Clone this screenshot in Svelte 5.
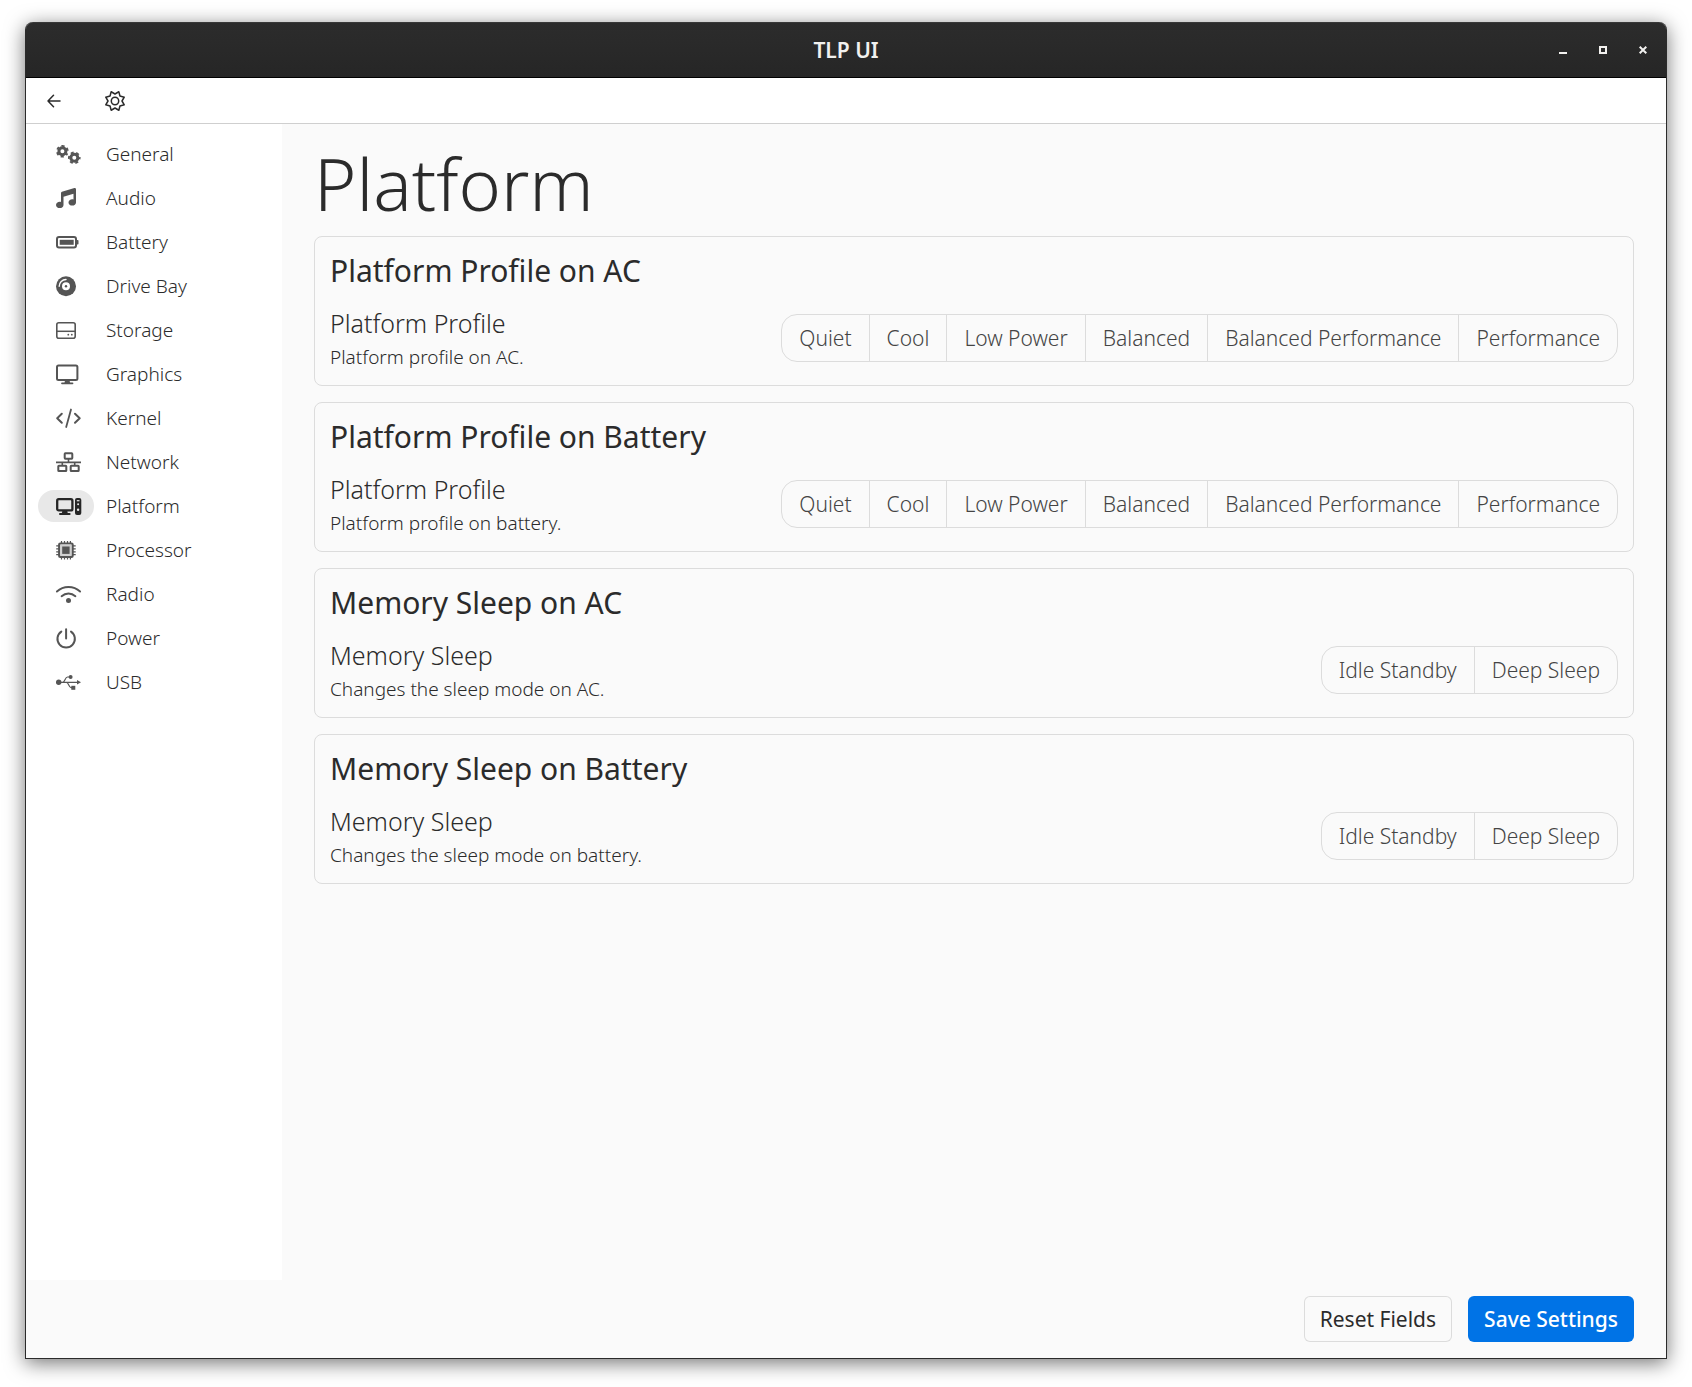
<script>
  const nav = [
    { id: 'general', label: 'General', w: 25 },
    { id: 'audio', label: 'Audio', w: 20 },
    { id: 'battery', label: 'Battery', w: 23 },
    { id: 'drive', label: 'Drive Bay', w: 20 },
    { id: 'storage', label: 'Storage', w: 20 },
    { id: 'graphics', label: 'Graphics', w: 23 },
    { id: 'kernel', label: 'Kernel', w: 25 },
    { id: 'network', label: 'Network', w: 25 },
    { id: 'platform', label: 'Platform', w: 26 },
    { id: 'processor', label: 'Processor', w: 20 },
    { id: 'radio', label: 'Radio', w: 25 },
    { id: 'power', label: 'Power', w: 20 },
    { id: 'usb', label: 'USB', w: 25 }
  ];
  const profiles = ['Quiet', 'Cool', 'Low Power', 'Balanced', 'Balanced Performance', 'Performance'];
  const sleeps = ['Idle Standby', 'Deep Sleep'];
  const cards = [
    { title: 'Platform Profile on AC', label: 'Platform Profile', desc: 'Platform profile on AC.', options: profiles },
    { title: 'Platform Profile on Battery', label: 'Platform Profile', desc: 'Platform profile on battery.', options: profiles },
    { title: 'Memory Sleep on AC', label: 'Memory Sleep', desc: 'Changes the sleep mode on AC.', options: sleeps },
    { title: 'Memory Sleep on Battery', label: 'Memory Sleep', desc: 'Changes the sleep mode on battery.', options: sleeps }
  ];
  let active = $state('platform');
  let choices = $state({});

  const cog = Array.from({ length: 16 }, (_, i) => {
    const a = ((i + 1) * Math.PI) / 8;
    const r = i % 2 ? 7 : 10;
    return `${(11 + r * Math.cos(a)).toFixed(2)},${(11 + r * Math.sin(a)).toFixed(2)}`;
  }).join(' ');
</script>

{#snippet icon(id, w)}
  <svg class="icon" width={w} height="20" viewBox="0 0 {w} 20" aria-hidden="true">
    {#if id === 'general'}
      <circle cx="6.4" cy="7.3" r="3.5" stroke-width="3" />
      <circle cx="6.4" cy="7.3" r="5.4" stroke-width="1.8" stroke-dasharray="3 2.65" stroke-dashoffset="1.5" transform="rotate(30 6.4 7.3)" />
      <circle cx="18.3" cy="13.8" r="3.5" stroke-width="3" />
      <circle cx="18.3" cy="13.8" r="5.4" stroke-width="1.8" stroke-dasharray="3 2.65" stroke-dashoffset="1.5" />
    {:else if id === 'audio'}
      <path class="fill" transform="scale(.0390625)" d="M499.1 6.3c8.1 6 12.9 15.6 12.9 25.7V368c0 44.2-43 80-96 80s-96-35.800-96-80 43-80 96-80c11.200 0 22 1.600 32 4.600V147L192 223.800V432c0 44.200-43 80-96 80S0 476.200 0 432s43-80 96-80c11.200 0 22 1.600 32 4.600V128c0-14.100 9.300-26.600 22.800-30.700l320-96c9.700-2.900 20.200-1.100 28.300 5z" />
    {:else if id === 'battery'}
      <rect x="1" y="5" width="19" height="10.600" rx="2" />
      <rect class="fill" x="20.500" y="8" width="2" height="4.600" rx=".8" />
      <rect class="fill" x="3.700" y="7.800" width="14" height="5" />
    {:else if id === 'drive'}
      <circle class="fill" cx="10" cy="10.300" r="10" />
      <circle class="hole" cx="10" cy="10.300" r="4" />
      <circle class="fill" cx="10" cy="10.300" r="1.200" />
      <path class="cut" d="M3.200 10.300A6.800 6.800 0 0 1 10 3.500" />
    {:else if id === 'storage'}
      <rect x=".8" y="2.800" width="18.400" height="15.400" rx="2" stroke-width="1.600" />
      <path d="M1 11.300h18" stroke-width="1.500" />
      <circle class="fill" cx="12.300" cy="14.700" r=".9" />
      <circle class="fill" cx="15.800" cy="14.700" r=".9" />
    {:else if id === 'graphics'}
      <rect x="1" y="1.400" width="20.400" height="14.600" rx="1.500" />
      <path d="M6 19.300h10.500" stroke-linecap="round" stroke-width="1.800" />
      <path class="fill" d="M9 16.500h4.600l.5 2.500h-5.600z" />
    {:else if id === 'kernel'}
      <path d="M5.800 5.800 1.200 10.300l4.600 4.500M19 5.800l4.700 4.500-4.700 4.500" stroke-linecap="round" stroke-linejoin="round" />
      <path d="M15 1.500 10.200 19" stroke-linecap="round" stroke-width="1.800" />
    {:else if id === 'network'}
      <rect x="8.700" y="1.300" width="7.600" height="5.400" rx=".6" />
      <rect x="2.300" y="13.700" width="8" height="5.400" rx=".6" />
      <rect x="14.700" y="13.700" width="8" height="5.400" rx=".6" />
      <path d="M0 10.400h25M12.500 7v3.400M6.300 10.400v3M18.700 10.400v3" stroke-width="1.600" />
    {:else if id === 'platform'}
      <rect x="1.200" y="3.200" width="15.200" height="11.200" rx="1.500" stroke-width="2.300" />
      <path d="M4 18h9.600" stroke-linecap="round" />
      <path class="fill" d="M6.300 15h5l.5 2.500h-6z" />
      <rect class="fill" x="19" y="2" width="6.300" height="17" rx="2" />
      <path class="notch" d="M20.800 4.700h2.700" />
      <circle class="notch-dot" cx="22.100" cy="8.300" r="1" />
      <circle class="notch-dot" cx="22.100" cy="13.700" r="1.200" />
    {:else if id === 'processor'}
      <rect x="3.200" y="3.500" width="13.400" height="13.400" rx="1" stroke-width="2.200" />
      <rect class="soft" x="4.300" y="4.600" width="11.200" height="11.200" />
      <rect class="fill" x="6.200" y="6.500" width="7.400" height="7.400" />
      <path d="M5.500 1v2M8.500 1v2M11.500 1v2M14.400 1v2M5.500 17.400v2M8.500 17.400v2M11.500 17.400v2M14.400 17.400v2M.2 5.800h3M.2 8.800h3M.2 11.800h3M.2 14.700h3M16.700 5.800h3M16.700 8.800h3M16.700 11.800h3M16.700 14.700h3" stroke-width="1.200" />
    {:else if id === 'radio'}
      <path d="M.9 7.500c6.500-6 16.700-6 23.200 0M5.600 12.200c4-3.700 9.800-3.700 13.800 0" stroke-linecap="round" stroke-width="1.900" />
      <circle class="fill" cx="12.500" cy="16.600" r="2.500" />
    {:else if id === 'power'}
      <path d="M5.300 3.600a8.700 8.700 0 1 0 9.700 0M10.100 1.300v9.200" stroke-linecap="round" stroke-width="2" />
    {:else if id === 'usb'}
      <circle class="fill" cx="2.700" cy="10.300" r="2.700" />
      <path d="M3 10.300h19M6.500 10.300c2.500 0 2.500-5.300 5-5.300h3M10.500 10.300c2 0 2.500 5.300 4.500 5.300h2" stroke-width="1.200" />
      <circle class="fill" cx="14.600" cy="5" r="2" />
      <rect class="fill" x="15.300" y="13.800" width="4" height="4" />
      <path class="fill" d="M21 8l4 2.300-4 2.300z" />
    {/if}
  </svg>
{/snippet}

<div class="desktop">
  <div class="window">
    <header class="titlebar">
      <span class="title">TLP UI</span>
      <div class="controls">
        <button aria-label="Minimize"><svg width="8" height="8" viewBox="0 0 8 8"><path d="M0 7h8" /></svg></button>
        <button aria-label="Maximize"><svg width="8" height="8" viewBox="0 0 8 8"><path d="M1 1h6v6H1z" /></svg></button>
        <button aria-label="Close"><svg width="8" height="8" viewBox="0 0 8 8"><path d="M.7.7l6.600 6.600M7.300.7.7 7.300" /></svg></button>
      </div>
    </header>

    <div class="toolbar">
      <button aria-label="Back">
        <svg width="14" height="14" viewBox="0 0 14 14"><path d="M13 7H1M6.500 1.300 1 7l5.500 5.700" /></svg>
      </button>
      <button aria-label="Settings">
        <svg width="22" height="22" viewBox="0 0 22 22"><polygon points={cog} /><circle cx="11" cy="11" r="3.700" /></svg>
      </button>
    </div>

    <div class="body">
      <nav>
        {#each nav as item}
          <a href="#{item.id}" class:active={active === item.id} onclick={() => (active = item.id)}>
            <span class="pill">{@render icon(item.id, item.w)}</span>
            {item.label}
          </a>
        {/each}
      </nav>

      <main>
        <h1>Platform</h1>
        {#each cards as card, c}
          <section>
            <h2>{card.title}</h2>
            <div class="setting">
              <div class="text">
                <h3 id="label-{c}">{card.label}</h3>
                <p>{card.desc}</p>
              </div>
              <div class="group" role="group" aria-labelledby="label-{c}">
                {#each card.options as option}
                  <button aria-pressed={choices[c] === option} onclick={() => (choices[c] = option)}>{option}</button>
                {/each}
              </div>
            </div>
          </section>
        {/each}
      </main>
    </div>

    <footer>
      <button class="reset" onclick={() => (choices = {})}>Reset Fields</button>
      <button class="save">Save Settings</button>
    </footer>
  </div>
</div>

<style>
  :global(body) {
    margin: 0;
    background: #fff;
  }
  .desktop {
    box-sizing: border-box;
    min-height: 100vh;
    padding: 22px 25px 28px;
    display: flex;
    font-family: 'Noto Sans', 'Open Sans', sans-serif;
    font-weight: 300;
    color: #2b2b2b;
  }
  .window {
    flex: 1;
    min-width: 0;
    display: flex;
    flex-direction: column;
    border: 1px solid #2b2b2b;
    border-top: 0;
    border-radius: 8px 8px 0 0;
    background: #fafafa;
    box-shadow: 0 4px 20px rgba(0, 0, 0, 0.55);
  }
  button {
    font: inherit;
    color: inherit;
    background: none;
    border: 0;
    padding: 0;
    cursor: pointer;
  }
  h1, h2, h3, p {
    margin: 0;
  }
  svg {
    display: block;
    fill: none;
  }

  .titlebar {
    box-sizing: border-box;
    height: 56px;
    display: grid;
    grid-template-columns: 1fr auto 1fr;
    align-items: center;
    border-top: 1px solid #383838;
    border-bottom: 1px solid #000;
    border-radius: 7px 7px 0 0;
    background: linear-gradient(#2c2c2c, #262626);
    color: #f2f1ef;
  }
  .title {
    grid-column: 2;
    font-size: 21px;
    font-weight: 600;
    line-height: 28px;
  }
  .controls {
    display: flex;
    justify-content: flex-end;
    gap: 16px;
    padding-right: 11px;
  }
  .controls button {
    width: 24px;
    height: 24px;
    display: grid;
    place-items: center;
  }
  .controls path {
    stroke: #f2f1ef;
    stroke-width: 2;
  }

  .toolbar {
    height: 45px;
    display: flex;
    align-items: center;
    gap: 32px;
    padding-left: 14px;
    border-bottom: 1px solid #cfcfcf;
    background: #fff;
  }
  .toolbar button {
    width: 28px;
    height: 28px;
    display: grid;
    place-items: center;
  }
  .toolbar svg {
    stroke: #2b2b2b;
    stroke-width: 1.5;
    stroke-linecap: round;
    stroke-linejoin: round;
  }
  .toolbar button + button {
    width: 30px;
  }

  .body {
    flex: 1;
    display: flex;
  }
  nav {
    box-sizing: border-box;
    flex: none;
    width: 256px;
    padding: 8px 12px;
    background: #fff;
  }
  nav a {
    height: 44px;
    display: flex;
    align-items: center;
    gap: 12px;
    font-size: 19px;
    color: #2b2b2b;
    text-decoration: none;
  }
  .pill {
    box-sizing: border-box;
    width: 56px;
    height: 32px;
    padding-left: 18px;
    display: flex;
    align-items: center;
    border-radius: 16px;
    --ink: #555;
    --paper: #fff;
  }
  .active .pill {
    background: #e8e8e8;
    --ink: #262626;
    --paper: #e8e8e8;
  }
  .icon {
    overflow: visible;
    stroke: var(--ink);
    stroke-width: 2;
  }
  .icon .fill {
    fill: var(--ink);
    stroke: none;
  }
  .icon .hole,
  .icon .notch-dot {
    fill: var(--paper);
    stroke: none;
  }
  .icon .cut {
    stroke: var(--paper);
    stroke-width: 1.4;
    stroke-linecap: round;
  }
  .icon .notch {
    stroke: var(--paper);
    stroke-width: 1.2;
  }
  .icon .soft {
    fill: #d0d0d0;
    stroke: none;
  }

  main {
    flex: 1;
    min-width: 0;
    padding: 22px 32px 16px;
    display: flex;
    flex-direction: column;
    gap: 16px;
  }
  h1 {
    font-size: 72px;
    font-weight: 350;
    line-height: 74px;
  }
  section {
    padding: 16px 15px 13px;
    border: 1px solid #dcdcdc;
    border-radius: 8px;
  }
  h2 {
    font-size: 30px;
    font-weight: 400;
    line-height: 36px;
  }
  .setting {
    display: flex;
    align-items: center;
    justify-content: space-between;
    gap: 16px;
    margin-top: 15px;
  }
  h3 {
    font-size: 25px;
    font-weight: 300;
    line-height: 38px;
  }
  p {
    font-size: 19px;
    line-height: 30px;
  }
  .group {
    flex: none;
    display: flex;
    border: 1px solid #dcdcdc;
    border-radius: 16px;
    color: #444;
  }
  .group button {
    height: 46px;
    padding: 0 17px;
    font-size: 21px;
  }
  .group button + button {
    border-left: 1px solid #dcdcdc;
  }

  footer {
    display: flex;
    justify-content: flex-end;
    gap: 16px;
    padding: 16px 32px;
  }
  footer button {
    height: 46px;
    padding: 0 16px;
    border-radius: 6px;
    font-size: 21px;
    font-weight: 400;
  }
  .reset {
    box-shadow: inset 0 0 0 1px #dcdcdc;
  }
  .save {
    background: #0073e6;
    color: #fff;
    font-weight: 500;
  }
</style>
